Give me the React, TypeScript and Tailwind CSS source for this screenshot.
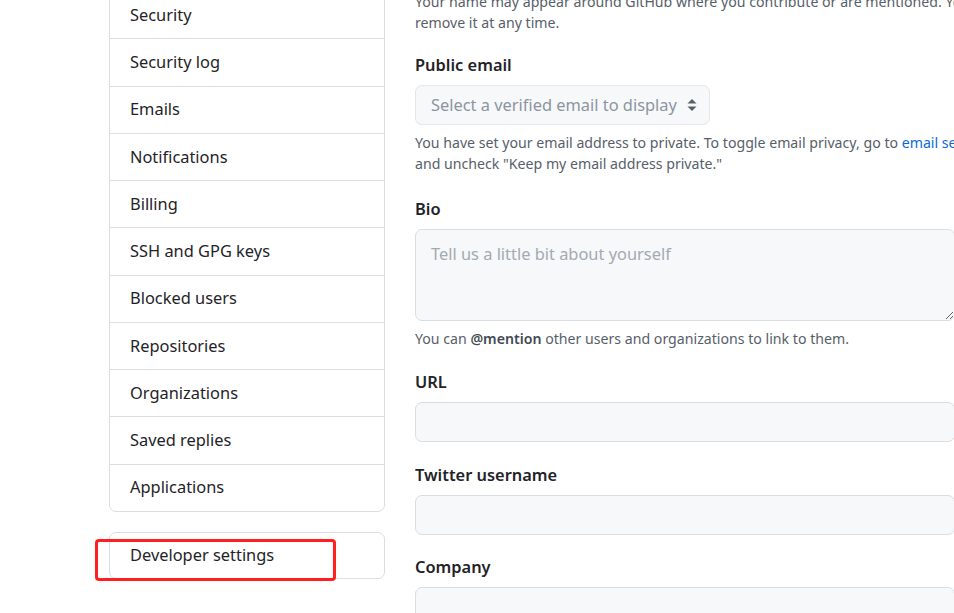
import React from "react";

const menu = [
  "Profile",
  "Account",
  "Security",
  "Security log",
  "Emails",
  "Notifications",
  "Billing",
  "SSH and GPG keys",
  "Blocked users",
  "Repositories",
  "Organizations",
  "Saved replies",
  "Applications",
];

function Label({ children }: { children: React.ReactNode }) {
  return (
    <div className="text-[16.4px] leading-[22px] font-semibold text-[#1f2328] mb-[9px]">
      {children}
    </div>
  );
}

function TextInput() {
  return (
    <div className="h-[40px] w-full rounded-[7px] border border-[#d8dee4] bg-[#f6f8fa]" />
  );
}

export default function App() {
  return (
    <div
      className="h-[613px] w-[954px] overflow-hidden bg-white text-[#1f2328]"
      style={{ fontFamily: '"Segoe UI", "Noto Sans", "Open Sans", sans-serif' }}
    >
      <div className="flex -mt-[104.5px] pl-[109px] gap-[30px]">
        {/* Settings menu */}
        <div className="w-[276px] shrink-0">
          <nav className="rounded-[7px] border border-[#d8dee4]">
            {menu.map((item, i) => (
              <div
                key={item}
                className={
                  "h-[47.25px] flex items-center pl-[20px] text-[16.4px] " +
                  (i > 0 ? "border-t border-[#d8dee4]" : "")
                }
              >
                {item}
              </div>
            ))}
          </nav>

          <div className="relative mt-[20px] h-[47px] rounded-[7px] border border-[#d8dee4] flex items-center pl-[20px] text-[16.4px]">
            Developer settings
            {/* annotation */}
            <div className="absolute left-[-15px] top-[6px] w-[241px] h-[42px] rounded-[4px] border-[3.5px] border-[#ff1f1f]" />
          </div>
        </div>

        {/* Profile form */}
        <div className="w-[540px] shrink-0 pt-[17.5px]">
          <Label>Name</Label>
          <TextInput />
          <p className="mt-[6.5px] text-[14.15px] leading-[21px] text-[#57606a] whitespace-nowrap">
            Your name may appear around GitHub where you contribute or are mentioned. You can
            <br />
            remove it at any time.
          </p>

          <div className="mt-[21.5px]">
            <Label>Public email</Label>
            <div className="flex h-[40px] w-[295px] items-center justify-between rounded-[7px] border border-[#e4e7eb] bg-[#f6f8fa] pl-[15px] pr-[12px]">
              <span className="text-[16.4px] text-[#8c959f] whitespace-nowrap">
                Select a verified email to display
              </span>
              <svg width="10" height="14" viewBox="0 0 10 14" className="text-[#57606a] shrink-0">
                <path d="M5 1 L9.5 5.5 H0.5 Z" fill="currentColor" />
                <path d="M5 13 L9.5 8.5 H0.5 Z" fill="currentColor" />
              </svg>
            </div>
            <p className="mt-[6.5px] text-[14.15px] leading-[21px] text-[#57606a] whitespace-nowrap">
              You have set your email address to private. To toggle email privacy, go to{" "}
              <span className="text-[#0969da]">email settings</span>
              <br />
              and uncheck "Keep my email address private."
            </p>
          </div>

          <div className="mt-[24.5px]">
            <Label>Bio</Label>
            <textarea
              readOnly
              placeholder="Tell us a little bit about yourself"
              className="block h-[92px] w-full rounded-[7px] border border-[#d8dee4] bg-[#f6f8fa] px-[15px] py-[11px] text-[16.4px] leading-[26px] placeholder:text-[#a3aab1] outline-none"
            />
            <p className="mt-[7px] text-[14.15px] leading-[21px] text-[#57606a]">
              You can <span className="font-semibold text-[#424a53]">@mention</span> other users
              and organizations to link to them.
            </p>
          </div>

          <div className="mt-[21.5px]">
            <Label>URL</Label>
            <TextInput />
          </div>

          <div className="mt-[22px]">
            <Label>Twitter username</Label>
            <TextInput />
          </div>

          <div className="mt-[21px]">
            <Label>Company</Label>
            <TextInput />
          </div>
        </div>
      </div>
    </div>
  );
}
